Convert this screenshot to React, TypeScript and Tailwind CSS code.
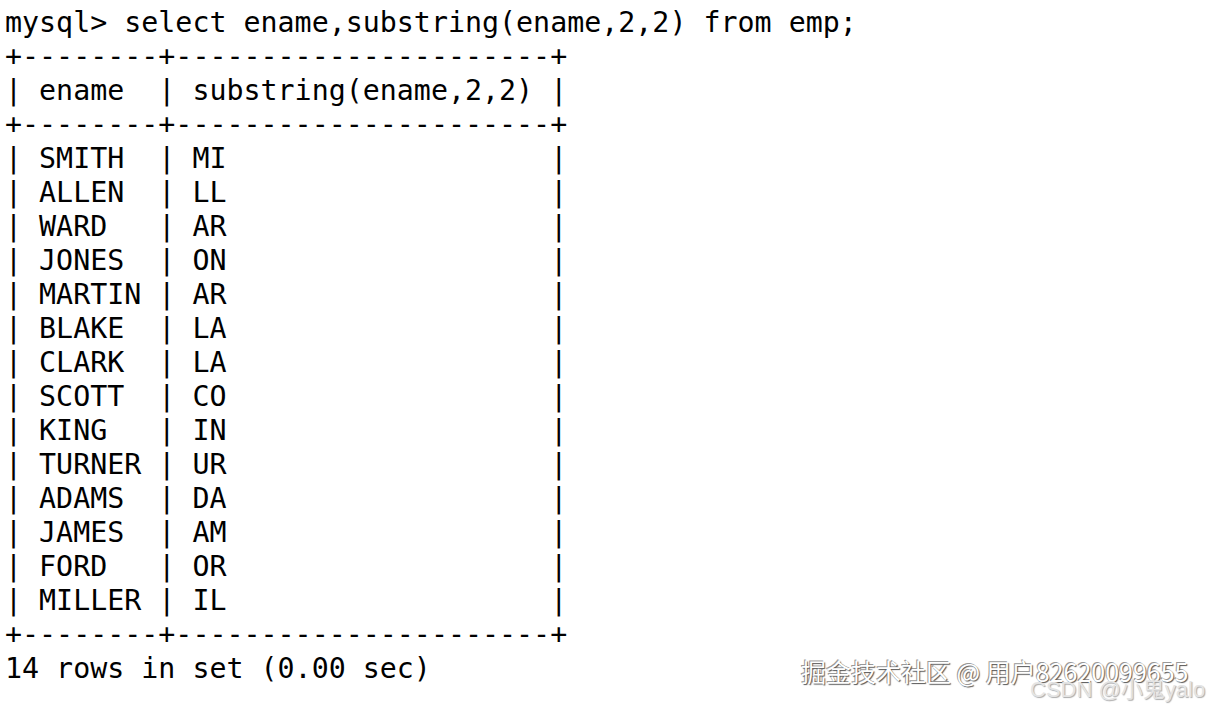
const names = ["SMITH", "ALLEN", "WARD", "JONES", "MARTIN", "BLAKE", "CLARK", "SCOTT", "KING", "TURNER", "ADAMS", "JAMES", "FORD", "MILLER"];

function App() {
    const border = "+--------+----------------------+"
    const lines = [
        "mysql> select ename,substring(ename,2,2) from emp;",
        border,
        "| ename  | substring(ename,2,2) |",
        border,
        ...names.map(n => `| ${n.padEnd(6)} | ${n.substring(1, 3).padEnd(20)} |`),
        border,
        "14 rows in set (0.00 sec)",
    ]

    return (
        <div className="relative w-[1212px] h-[709px] bg-white overflow-hidden">
            <pre className="pl-[5px] pt-[6px] text-[28.3px] leading-[34px] text-black font-['DejaVu_Sans_Mono',monospace]">
                {lines.join("\n")}
            </pre>

            <div className="absolute left-[801px] top-[655px] text-[25px] leading-[32px] text-white font-['Noto_Sans_CJK_SC',sans-serif] [text-shadow:1px_1px_1px_#555,-1px_-1px_0_#999]">
                掘金技术社区 @ 用户82620099655
            </div>
            <div className="absolute left-[1030px] top-[675px] text-[22px] leading-[30px] text-[#e4e4e4] font-['Liberation_Sans','Noto_Sans_CJK_SC',sans-serif] [text-shadow:1px_1px_1px_#aaa]">
                CSDN @小鬼yalo
            </div>
        </div>
    );
}

export default App;
